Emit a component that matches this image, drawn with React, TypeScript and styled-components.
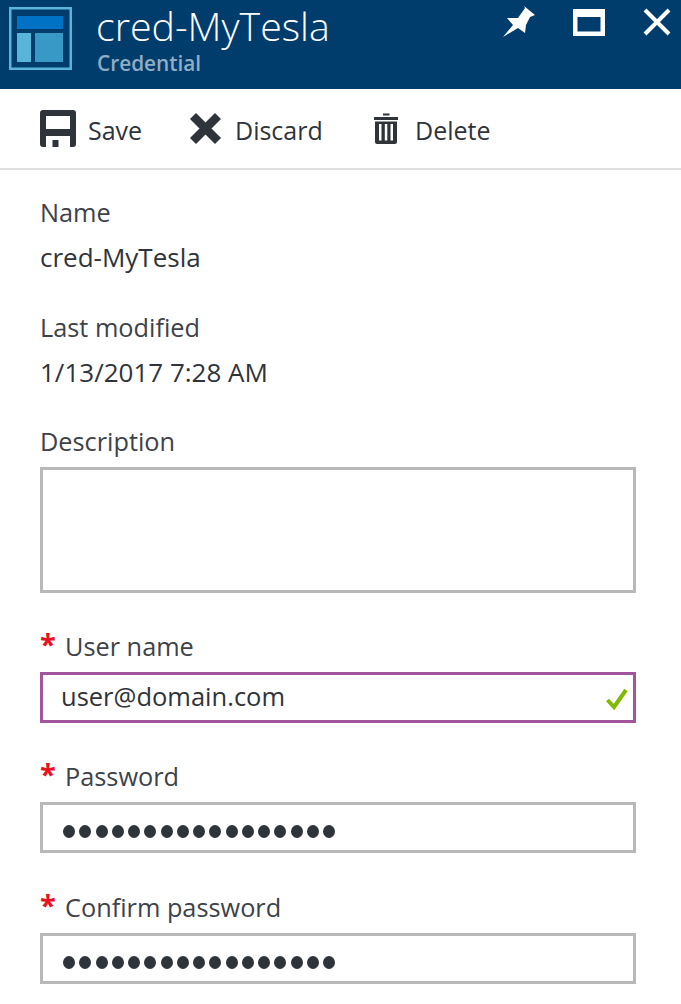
import styled, { createGlobalStyle } from 'styled-components';

const GlobalStyle = createGlobalStyle`
  html, body { margin: 0; padding: 0; background: #fff; }
  body { font-family: "Open Sans", "Noto Sans", "Liberation Sans", sans-serif; color: #3e4249; }
`;

function App() {
  const dots = Array.from({ length: 17 }, (_, i) => i);
  return (
    <StyledBlade>
      <GlobalStyle />
      <StyledHeader>
        <StyledLogo viewBox="0 0 63 63">
          <rect x="1.250" y="1.250" width="60.500" height="60.500" fill="none" stroke="#59b4d9" strokeWidth="2.500" />
          <rect x="8" y="9" width="46" height="13" fill="#0072c6" />
          <rect x="8" y="26" width="14" height="29" fill="#59b4d9" />
          <rect x="26" y="26" width="28" height="29" fill="#3999c6" />
        </StyledLogo>
        <StyledTitles>
          <StyledTitle>cred-MyTesla</StyledTitle>
          <StyledSubtitle>Credential</StyledSubtitle>
        </StyledTitles>
        <StyledWindowButtons>
          <svg width="34" height="34" viewBox="0 0 34 34">
            <path d="M2 32 L12 20 L6 13 L17 13 L24 3 L23 1 L34 10 L29 12 L25 20 L24 28 L17 23 Z" fill="#fff" />
          </svg>
          <svg width="32" height="27" viewBox="0 0 32 27">
            <path d="M0 0 H32 V27 H0 Z M4.500 8 V22.500 H27.500 V8 Z" fill="#fff" fillRule="evenodd" />
          </svg>
          <svg width="28" height="28" viewBox="0 0 28 28">
            <path d="M2 2 L26 26 M26 2 L2 26" stroke="#fff" strokeWidth="4" fill="none" />
          </svg>
        </StyledWindowButtons>
      </StyledHeader>
      <StyledToolbar>
        <StyledCommand $width={149} $gap={12}>
          <svg width="36" height="37" viewBox="0 0 36 37">
            <path
              d="M3 0 H33 Q36 0 36 3 V34 Q36 37 33 37 H3 Q0 37 0 34 V3 Q0 0 3 0 Z M6 6 V19 H30 V6 Z M6 26 V37 H12.500 V30 H18.500 V37 H30 V26 Z"
              fill="#2f343b"
              fillRule="evenodd"
            />
          </svg>
          <span>Save</span>
        </StyledCommand>
        <StyledCommand $width={185} $gap={13}>
          <svg width="33" height="33" viewBox="0 0 33 33">
            <path d="M4 4 L29 29 M29 4 L4 29" stroke="#2f343b" strokeWidth="8.500" fill="none" />
          </svg>
          <span>Discard</span>
        </StyledCommand>
        <StyledCommand $width={140} $gap={17}>
          <svg width="24" height="32" viewBox="0 0 24 32">
            <path
              d="M9 0.500 H15.500 V2.500 H9 Z M0 4 H24 V7 H0 Z M1 8.500 H23 V29 Q23 31 21 31 H3 Q1 31 1 29 Z M5 11 V27.500 H7.500 V11 Z M10.800 11 V27.500 H13.300 V11 Z M16.500 11 V27.500 H19 V11 Z"
              fill="#2f343b"
              fillRule="evenodd"
            />
          </svg>
          <span>Delete</span>
        </StyledCommand>
      </StyledToolbar>
      <StyledForm>
        <StyledStatic $height={115}>
          <StyledLabel>Name</StyledLabel>
          <StyledValue>cred-MyTesla</StyledValue>
        </StyledStatic>
        <StyledStatic $height={114}>
          <StyledLabel>Last modified</StyledLabel>
          <StyledValue>1/13/2017 7:28 AM</StyledValue>
        </StyledStatic>
        <StyledField $gap={37.5}>
          <StyledLabel>Description</StyledLabel>
          <StyledTextArea />
        </StyledField>
        <StyledField>
          <StyledLabel>
            <StyledStar>*</StyledStar>User name
          </StyledLabel>
          <StyledInput $valid>
            user@domain.com
            <StyledCheck width="24" height="24" viewBox="0 0 24 24">
              <path d="M2.500 13 L9 20 L21 3" stroke="#7fba00" strokeWidth="4" fill="none" />
            </StyledCheck>
          </StyledInput>
        </StyledField>
        <StyledField>
          <StyledLabel>
            <StyledStar>*</StyledStar>Password
          </StyledLabel>
          <StyledInput>
            {dots.map((d) => <StyledDot key={d} />)}
          </StyledInput>
        </StyledField>
        <StyledField>
          <StyledLabel>
            <StyledStar>*</StyledStar>Confirm password
          </StyledLabel>
          <StyledInput>
            {dots.map((d) => <StyledDot key={d} />)}
          </StyledInput>
        </StyledField>
      </StyledForm>
    </StyledBlade>
  );
}

export default App;

const StyledBlade = styled.div`
  width: 681px;
  height: 1004px;
  overflow: hidden;
  background: #fff;
`;

const StyledHeader = styled.header`
  height: 89px;
  background: #003c6c;
  display: flex;
  align-items: flex-start;
  padding: 7px 10px 0 9px;
  box-sizing: border-box;
`;

const StyledLogo = styled.svg`
  width: 63px;
  height: 63px;
  flex: none;
`;

const StyledTitles = styled.div`
  margin-left: 25px;
  flex: 1;
`;

const StyledTitle = styled.div`
  font-size: 39.300px;
  font-weight: 300;
  line-height: 44px;
  margin-top: -3px;
  margin-left: -1px;
  color: #fff;
`;

const StyledSubtitle = styled.div`
  font-size: 20.800px;
  line-height: 28px;
  margin-top: 1px;
  font-weight: 600;
  color: #8fadc4;
`;

const StyledWindowButtons = styled.div`
  display: flex;
  align-items: center;
  gap: 38px;
  margin-top: -2px;
`;

const StyledToolbar = styled.div`
  height: 81px;
  border-bottom: 2px solid #e0e0e0;
  box-sizing: border-box;
  display: flex;
  align-items: center;
  padding-left: 40px;
`;

const StyledCommand = styled.div<{ $width: number; $gap: number }>`
  width: ${(p) => p.$width}px;
  display: flex;
  align-items: center;
  gap: ${(p) => p.$gap}px;
  font-size: 25px;
  color: #2f343b;

  span {
    padding-top: 2px;
  }
`;

const StyledForm = styled.main`
  padding: 27px 45px 0 40px;
`;

const StyledStatic = styled.div<{ $height: number }>`
  height: ${(p) => p.$height}px;
`;

const StyledLabel = styled.div`
  font-size: 25.300px;
  line-height: 30px;
  color: #3e4249;
  display: flex;
`;

const StyledValue = styled.div`
  font-size: 26px;
  line-height: 30px;
  margin-top: 15px;
  color: #2f343b;
`;

const StyledField = styled.div<{ $gap?: number }>`
  margin-bottom: ${(p) => p.$gap ?? 38.5}px;
`;

const StyledStar = styled.span`
  width: 25px;
  font-size: 29px;
  line-height: 26px;
  font-weight: 700;
  color: #e81123;
`;

const StyledTextArea = styled.div`
  margin-top: 11px;
  height: 126px;
  border: 3px solid #b8b8b8;
  box-sizing: border-box;
`;

const StyledInput = styled.div<{ $valid?: boolean }>`
  position: relative;
  margin-top: 11px;
  height: 51px;
  border: 3px solid ${(p) => (p.$valid ? '#a2549c' : '#b8b8b8')};
  box-sizing: border-box;
  padding: 0 0 2px 18px;
  display: flex;
  align-items: center;
  gap: 4.250px;
  font-size: 25.500px;
  color: #2f343b;
`;

const StyledCheck = styled.svg`
  position: absolute;
  right: 4px;
  top: 12px;
`;

const StyledDot = styled.span`
  width: 12px;
  height: 13px;
  margin: 10px -2px 0 2px;
  border-radius: 50%;
  background: #2f343b;
`;
